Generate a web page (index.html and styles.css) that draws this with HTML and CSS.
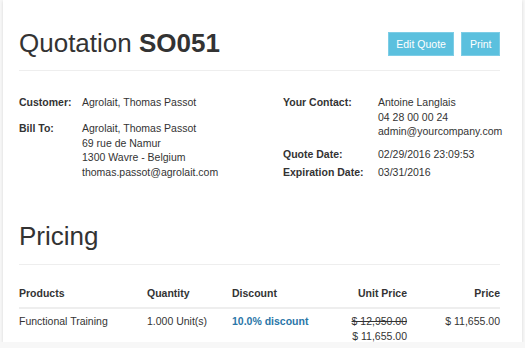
FILE: index.html
```html
<!DOCTYPE html>
<html>
<head>
<meta charset="utf-8">
<link rel="stylesheet" href="styles.css">
</head>
<body>
<div class="card">
  <div class="page-header">
    <h1 class="title">Quotation <strong>SO051</strong></h1>
    <div class="actions">
      <a class="btn">Edit Quote</a>
      <a class="btn">Print</a>
    </div>
  </div>

  <div class="details">
    <div class="col">
      <div class="info-row">
        <div class="label">Customer:</div>
        <div class="value">Agrolait, Thomas Passot</div>
      </div>
      <div class="info-row gap-lg">
        <div class="label">Bill To:</div>
        <div class="value">Agrolait, Thomas Passot<br>69 rue de Namur<br>1300 Wavre - Belgium<br>thomas.passot@agrolait.com</div>
      </div>
    </div>
    <div class="col">
      <div class="info-row">
        <div class="label label-wide">Your Contact:</div>
        <div class="value">Antoine Langlais<br>04 28 00 00 24<br>admin@yourcompany.com</div>
      </div>
      <div class="info-row gap-md">
        <div class="label label-wide">Quote Date:</div>
        <div class="value">02/29/2016 23:09:53</div>
      </div>
      <div class="info-row gap-sm">
        <div class="label label-wide">Expiration Date:</div>
        <div class="value">03/31/2016</div>
      </div>
    </div>
  </div>

  <h1 class="section-title">Pricing</h1>

  <table class="pricing">
    <colgroup>
      <col class="c-prod"><col class="c-qty"><col class="c-disc"><col class="c-unit"><col class="c-price">
    </colgroup>
    <thead>
      <tr>
        <th>Products</th>
        <th>Quantity</th>
        <th>Discount</th>
        <th class="num">Unit Price</th>
        <th class="num">Price</th>
      </tr>
    </thead>
    <tbody>
      <tr>
        <td>Functional Training</td>
        <td>1.000 Unit(s)</td>
        <td><strong class="discount">10.0% discount</strong></td>
        <td class="num"><span class="old">$ 12,950.00</span><br>$ 11,655.00</td>
        <td class="num">$ 11,655.00</td>
      </tr>
    </tbody>
  </table>
</div>
</body>
</html>
```

FILE: styles.css
```css
html, body {
  margin: 0;
  padding: 0;
}
body {
  background: #f7f7f7;
  font-family: "Liberation Sans", Arial, Helvetica, sans-serif;
  font-size: 10.5px;
  line-height: 14.7px;
  color: #333;
}
.card {
  margin-left: 3px;
  width: 519px;
  height: 342px;
  box-sizing: border-box;
  padding: 0 22px 0 16px;
  background: #fff;
  box-shadow: 0 1px 3px rgba(0, 0, 0, 0.13);
  overflow: hidden;
}
.page-header {
  display: flex;
  justify-content: space-between;
  align-items: center;
  padding: 28px 0 12px;
  border-bottom: 1px solid #eee;
}
.title, .section-title {
  margin: 0;
  font-size: 26px;
  line-height: 30px;
  font-weight: normal;
  color: #333;
}
.title strong {
  font-weight: bold;
}
.actions {
  display: flex;
  gap: 7px;
  margin-top: 1px;
}
.btn {
  display: block;
  background: #5bc0de;
  border: 1px solid #7dcde6;
  color: #fff;
  font-size: 10.5px;
  line-height: 14.7px;
  padding: 4px 7.5px 3.3px;
}
.details {
  display: grid;
  grid-template-columns: 264px 1fr;
  padding-top: 24px;
}
.info-row {
  display: flex;
}
.label {
  width: 63px;
  flex: none;
  font-weight: bold;
}
.label-wide {
  width: 95px;
}
.gap-lg { margin-top: 11.3px; }
.gap-md { margin-top: 7.9px; }
.gap-sm { margin-top: 3.7px; }
.section-title {
  margin-top: 40.5px;
  padding-bottom: 13.7px;
  border-bottom: 1px solid #eee;
}
.pricing {
  width: 481px;
  table-layout: fixed;
  border-collapse: collapse;
  margin-top: 14.6px;
}
.c-prod { width: 128px; }
.c-qty { width: 85px; }
.c-disc { width: 100px; }
.c-unit { width: 75px; }
.c-price { width: 93px; }
.pricing th {
  text-align: left;
  font-weight: bold;
  padding: 6px 0;
  border-bottom: 2px solid #eee;
}
.pricing td {
  padding: 5.6px 0;
  vertical-align: top;
}
.pricing .num {
  text-align: right;
}
.discount {
  color: #2a76a8;
}
.old {
  text-decoration: line-through;
}
```
